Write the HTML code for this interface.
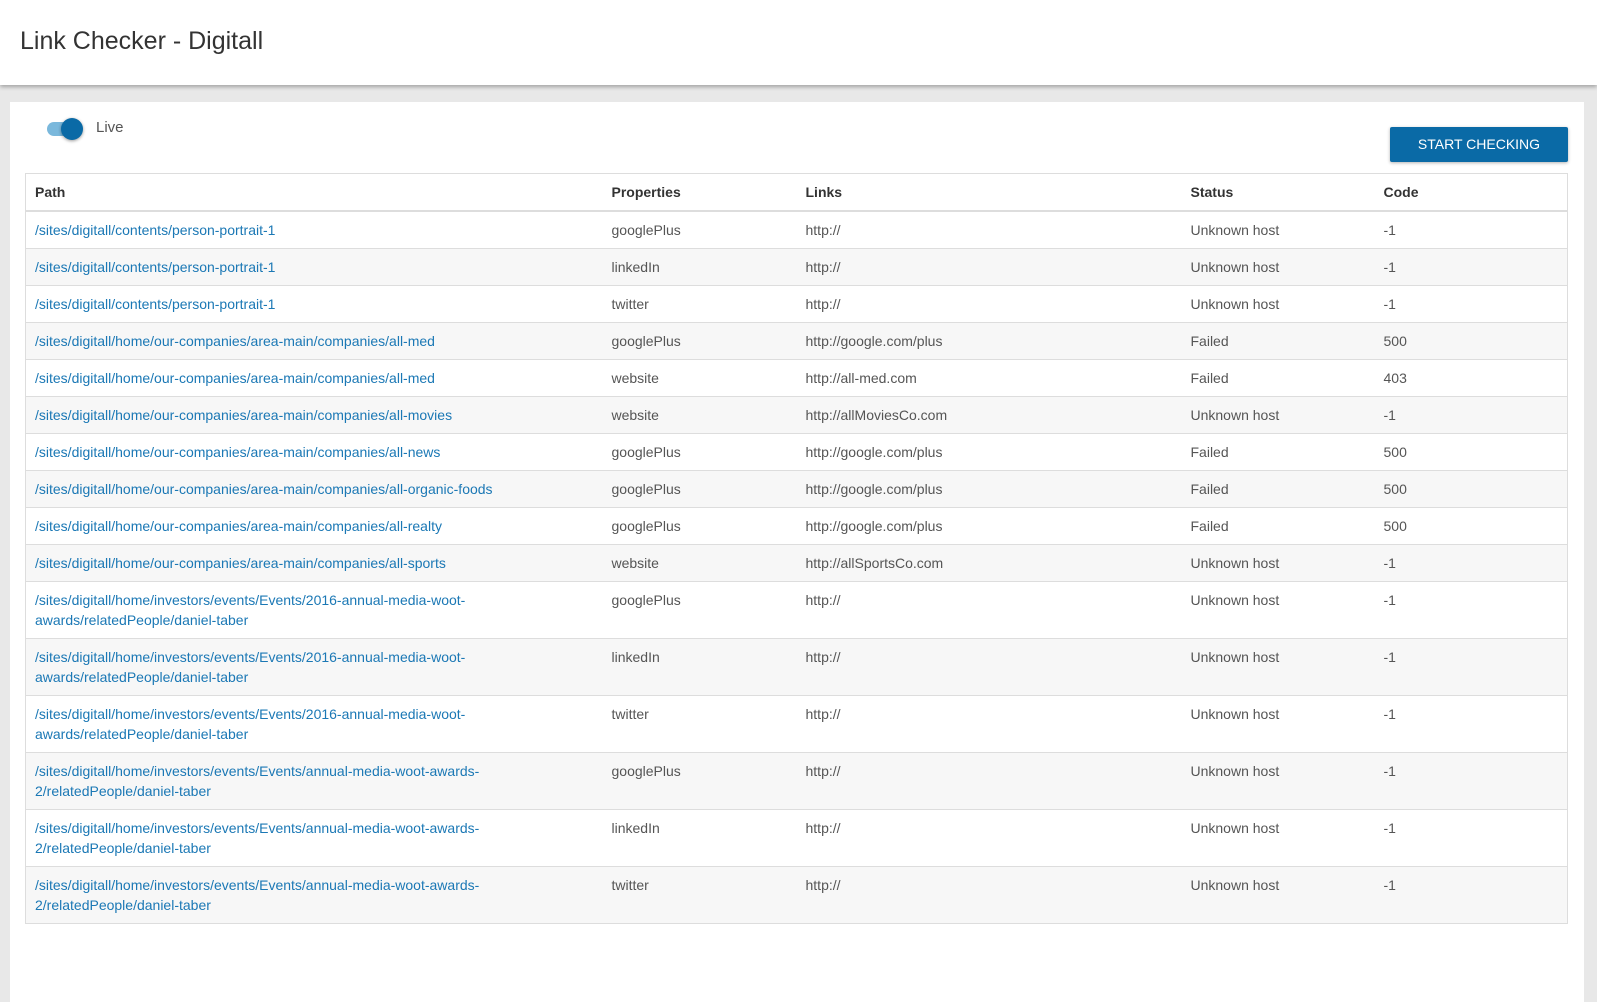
<!DOCTYPE html><html><head><style>
body{margin:0;width:1597px;height:925px;overflow:hidden;background:#e8e8e8;font-family:"Liberation Sans",sans-serif;}
.top{position:absolute;left:0;top:0;width:1597px;height:85px;background:#fff;box-shadow:0 2px 4px rgba(0,0,0,.3);}
.top h1{position:absolute;left:20px;top:27px;margin:0;font-weight:normal;font-size:25px;color:#333;}
.card{position:absolute;left:10px;top:102px;width:1574px;height:900px;background:#fff;}
.tog{position:absolute;left:47px;top:122px;width:34px;height:14px;border-radius:7px;background:#7ab8dc;}
.tog:after{content:"";position:absolute;right:-2px;top:-4px;width:22px;height:22px;border-radius:50%;background:#0a6aa6;box-shadow:0 1px 3px rgba(0,0,0,.4);}
.live{position:absolute;left:96px;top:119px;font-size:15px;color:#555;}
.btn{position:absolute;left:1390px;top:127px;width:178px;height:35px;background:#0a6aa6;color:#fff;font-size:14px;line-height:35px;text-align:center;border-radius:2px;box-shadow:0 1px 3px rgba(0,0,0,.3);}
table{position:absolute;left:25px;top:173px;width:1543px;border-collapse:collapse;font-size:14px;color:#555;border:1px solid #ddd;}
td,th{border-top:1px solid #ddd;padding:0 0 0 9px;text-align:left;vertical-align:top;line-height:20px;}
th{height:36px;vertical-align:middle;color:#333;border-bottom:2px solid #ddd;}
tr.s td{height:28px;padding-top:8px;}
tr.d td{height:48px;padding-top:8px;}
tr:nth-child(odd) td{background:#f7f7f7;}
a{color:#1b78b5;text-decoration:none;}
</style></head><body>
<div class="top"><h1>Link Checker - Digitall</h1></div>
<div class="card"></div>
<div class="tog"></div><div class="live">Live</div>
<div class="btn">START CHECKING</div>
<table>
<colgroup><col style="width:577px"><col style="width:194px"><col style="width:385px"><col style="width:193px"><col></colgroup>
<tr><th>Path</th><th>Properties</th><th>Links</th><th>Status</th><th>Code</th></tr>
<tr class="s"><td><a>/sites/digitall/contents/person-portrait-1</a></td><td>googlePlus</td><td>http://</td><td>Unknown host</td><td>-1</td></tr>
<tr class="s"><td><a>/sites/digitall/contents/person-portrait-1</a></td><td>linkedIn</td><td>http://</td><td>Unknown host</td><td>-1</td></tr>
<tr class="s"><td><a>/sites/digitall/contents/person-portrait-1</a></td><td>twitter</td><td>http://</td><td>Unknown host</td><td>-1</td></tr>
<tr class="s"><td><a>/sites/digitall/home/our-companies/area-main/companies/all-med</a></td><td>googlePlus</td><td>http://google.com/plus</td><td>Failed</td><td>500</td></tr>
<tr class="s"><td><a>/sites/digitall/home/our-companies/area-main/companies/all-med</a></td><td>website</td><td>http://all-med.com</td><td>Failed</td><td>403</td></tr>
<tr class="s"><td><a>/sites/digitall/home/our-companies/area-main/companies/all-movies</a></td><td>website</td><td>http://allMoviesCo.com</td><td>Unknown host</td><td>-1</td></tr>
<tr class="s"><td><a>/sites/digitall/home/our-companies/area-main/companies/all-news</a></td><td>googlePlus</td><td>http://google.com/plus</td><td>Failed</td><td>500</td></tr>
<tr class="s"><td><a>/sites/digitall/home/our-companies/area-main/companies/all-organic-foods</a></td><td>googlePlus</td><td>http://google.com/plus</td><td>Failed</td><td>500</td></tr>
<tr class="s"><td><a>/sites/digitall/home/our-companies/area-main/companies/all-realty</a></td><td>googlePlus</td><td>http://google.com/plus</td><td>Failed</td><td>500</td></tr>
<tr class="s"><td><a>/sites/digitall/home/our-companies/area-main/companies/all-sports</a></td><td>website</td><td>http://allSportsCo.com</td><td>Unknown host</td><td>-1</td></tr>
<tr class="d"><td><a>/sites/digitall/home/investors/events/Events/2016-annual-media-woot-<br>awards/relatedPeople/daniel-taber</a></td><td>googlePlus</td><td>http://</td><td>Unknown host</td><td>-1</td></tr>
<tr class="d"><td><a>/sites/digitall/home/investors/events/Events/2016-annual-media-woot-<br>awards/relatedPeople/daniel-taber</a></td><td>linkedIn</td><td>http://</td><td>Unknown host</td><td>-1</td></tr>
<tr class="d"><td><a>/sites/digitall/home/investors/events/Events/2016-annual-media-woot-<br>awards/relatedPeople/daniel-taber</a></td><td>twitter</td><td>http://</td><td>Unknown host</td><td>-1</td></tr>
<tr class="d"><td><a>/sites/digitall/home/investors/events/Events/annual-media-woot-awards-<br>2/relatedPeople/daniel-taber</a></td><td>googlePlus</td><td>http://</td><td>Unknown host</td><td>-1</td></tr>
<tr class="d"><td><a>/sites/digitall/home/investors/events/Events/annual-media-woot-awards-<br>2/relatedPeople/daniel-taber</a></td><td>linkedIn</td><td>http://</td><td>Unknown host</td><td>-1</td></tr>
<tr class="d"><td><a>/sites/digitall/home/investors/events/Events/annual-media-woot-awards-<br>2/relatedPeople/daniel-taber</a></td><td>twitter</td><td>http://</td><td>Unknown host</td><td>-1</td></tr>
</table>
</body></html>
